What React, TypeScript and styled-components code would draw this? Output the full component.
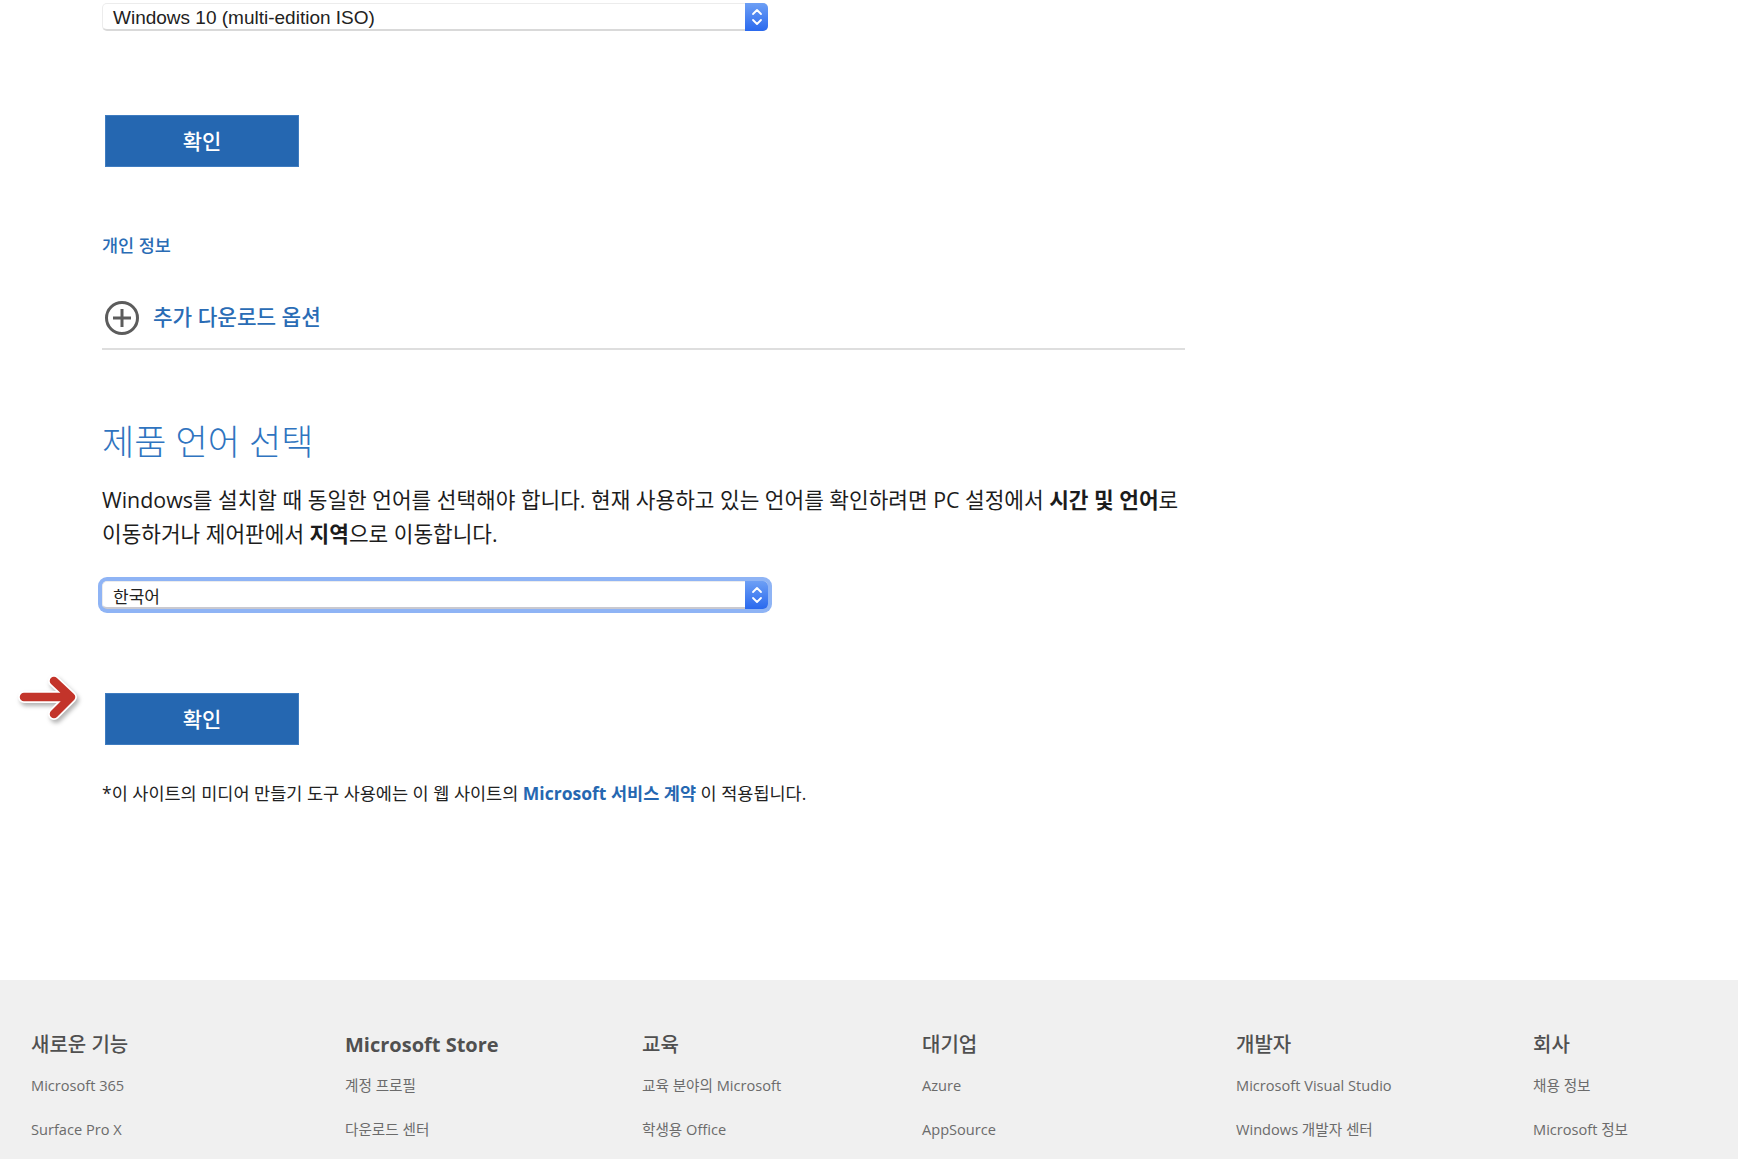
import React from "react";
import styled, { createGlobalStyle } from "styled-components";

const Global = createGlobalStyle`
  html, body { margin: 0; padding: 0; background: #fff; }
  body {
    font-family: "Open Sans", "Noto Sans CJK KR", sans-serif;
    color: #1a1a1a;
  }
`;

const Page = styled.div`
  width: 1738px;
  height: 1159px;
  overflow: hidden;
  display: flex;
  flex-direction: column;
`;

const Main = styled.main`
  flex: 0 0 980px;
  box-sizing: border-box;
  padding: 3px 0 0 102px;
`;

const SelectBox = styled.div<{ $focused?: boolean }>`
  width: 666px;
  height: 28px;
  box-sizing: border-box;
  display: flex;
  align-items: center;
  justify-content: space-between;
  margin-top: ${(p) => (p.$focused ? "31px" : "0")};
  background: #fff;
  border: 1px solid #ececec;
  border-bottom: 2px solid ${(p) => (p.$focused ? "#c9c9d0" : "#d9d9d9")};
  border-radius: 5px;
  box-shadow: ${(p) => (p.$focused ? "0 0 0 4px #8fb4f5" : "none")};
`;

const SelectText = styled.span<{ $size: number }>`
  padding: 2px 0 0 10px;
  font-family: "Liberation Sans", "Noto Sans CJK KR", sans-serif;
  font-size: ${(p) => p.$size}px;
  color: #222;
`;

const Stepper = styled.span`
  width: 23px;
  height: 28px;
  margin: -1px -1px -2px 0;
  display: flex;
  align-items: center;
  justify-content: center;
  background: linear-gradient(180deg, #6d9ff5 0%, #2a69ee 100%);
  border-radius: 0 5px 5px 0;
`;

const ButtonRow = styled.div<{ $top: number }>`
  position: relative;
  margin: ${(p) => p.$top}px 0 0 3px;
`;

const ConfirmButton = styled.button`
  display: block;
  width: 194px;
  height: 52px;
  padding: 0 0 3px;
  border: 1px solid #3f7cc0;
  background: #2567b1;
  color: #fff;
  font-family: "Noto Sans CJK KR", sans-serif;
  font-size: 21px;
  font-weight: 500;
`;

const ArrowMark = styled.svg`
  position: absolute;
  left: -87px;
  top: -19px;
  filter: drop-shadow(2px 3px 2px rgba(0, 0, 0, 0.3));
`;

const PrivacyLink = styled.a`
  display: block;
  margin-top: 66px;
  font-size: 17.5px;
  line-height: 24px;
  font-weight: 500;
  color: #2a6cb5;
`;

const Expander = styled.div`
  display: flex;
  align-items: center;
  gap: 13px;
  width: 1083px;
  margin-top: 43px;
  padding-bottom: 12px;
  border-bottom: 2px solid #dedede;
`;

const PlusIcon = styled.svg`
  flex: none;
  margin-left: 2px;
`;

const ExpanderLabel = styled.span`
  position: relative;
  top: -3px;
  font-size: 21.3px;
  font-weight: 500;
  color: #2a6cb5;
`;

const Heading = styled.h2`
  margin: 68px 0 0;
  font-size: 35px;
  line-height: 48px;
  font-weight: 300;
  color: #2f74c0;
`;

const Paragraph = styled.p`
  margin: 17px 0 0;
  font-size: 21.37px;
  line-height: 33.5px;
  white-space: nowrap;
  color: #1c1c1c;
`;

const Footnote = styled.p`
  margin: 36px 0 0;
  font-size: 17.5px;
  line-height: 24px;
  color: #222;
`;

const InlineLink = styled.a`
  color: #2567b1;
  font-weight: 700;
`;

const Footer = styled.footer`
  flex: 1;
  background: #f0f0f0;
  display: grid;
  grid-template-columns: 314px 297px 280px 314px 297px 1fr;
  padding: 53px 0 0 31px;
`;

const FooterColumn = styled.div`
  display: flex;
  flex-direction: column;
  gap: 20px;
`;

const FooterTitle = styled.h3<{ $strong?: boolean }>`
  margin: 0 0 -4px;
  font-size: 20px;
  line-height: 24px;
  font-weight: ${(p) => (p.$strong ? 700 : 500)};
  color: #505050;
`;

const FooterLink = styled.a`
  font-size: 14.6px;
  line-height: 24px;
  color: #6b6b6b;
`;

const Chevrons = () => (
  <svg width="12" height="20" viewBox="0 0 12 20" fill="none" stroke="#fff" strokeWidth="1.8" strokeLinecap="round" strokeLinejoin="round">
    <path d="M2 7l4-4 4 4" />
    <path d="M2 13l4 4 4-4" />
  </svg>
);

const columns = [
  { title: "새로운 기능", links: ["Microsoft 365", "Surface Pro X"] },
  { title: "Microsoft Store", strong: true, links: ["계정 프로필", "다운로드 센터"] },
  { title: "교육", links: ["교육 분야의 Microsoft", "학생용 Office"] },
  { title: "대기업", links: ["Azure", "AppSource"] },
  { title: "개발자", links: ["Microsoft Visual Studio", "Windows 개발자 센터"] },
  { title: "회사", links: ["채용 정보", "Microsoft 정보"] },
];

export default function App() {
  return (
    <Page>
      <Global />
      <Main>
        <SelectBox>
          <SelectText $size={19}>Windows 10 (multi-edition ISO)</SelectText>
          <Stepper><Chevrons /></Stepper>
        </SelectBox>
        <ButtonRow $top={84}>
          <ConfirmButton>확인</ConfirmButton>
        </ButtonRow>
        <PrivacyLink>개인 정보</PrivacyLink>
        <Expander>
          <PlusIcon width="36" height="36" viewBox="0 0 36 36" fill="none" stroke="#5c5c5c" strokeWidth="3">
            <circle cx="18" cy="18" r="15.5" />
            <path d="M18 9v18M9 18h18" strokeWidth="3" />
          </PlusIcon>
          <ExpanderLabel>추가 다운로드 옵션</ExpanderLabel>
        </Expander>
        <Heading>제품 언어 선택</Heading>
        <Paragraph>
          Windows를 설치할 때 동일한 언어를 선택해야 합니다. 현재 사용하고 있는 언어를 확인하려면 PC 설정에서 <strong>시간 및 언어</strong>로
          <br />
          이동하거나 제어판에서 <strong>지역</strong>으로 이동합니다.
        </Paragraph>
        <SelectBox $focused>
          <SelectText $size={17}>한국어</SelectText>
          <Stepper><Chevrons /></Stepper>
        </SelectBox>
        <ButtonRow $top={84}>
          <ArrowMark width="64" height="52" viewBox="0 0 64 52" fill="none" strokeLinecap="round" strokeLinejoin="round">
            <path d="M6 23H52M36 7L53 23L36 40" stroke="#fff" strokeWidth="12" />
            <path d="M6 23H52M36 7L53 23L36 40" stroke="#c3342a" strokeWidth="8.5" />
          </ArrowMark>
          <ConfirmButton>확인</ConfirmButton>
        </ButtonRow>
        <Footnote>
          *이 사이트의 미디어 만들기 도구 사용에는 이 웹 사이트의 <InlineLink>Microsoft 서비스 계약</InlineLink> 이 적용됩니다.
        </Footnote>
      </Main>
      <Footer>
        {columns.map((c) => (
          <FooterColumn key={c.title}>
            <FooterTitle $strong={c.strong}>{c.title}</FooterTitle>
            {c.links.map((l) => (
              <FooterLink key={l}>{l}</FooterLink>
            ))}
          </FooterColumn>
        ))}
      </Footer>
    </Page>
  );
}
